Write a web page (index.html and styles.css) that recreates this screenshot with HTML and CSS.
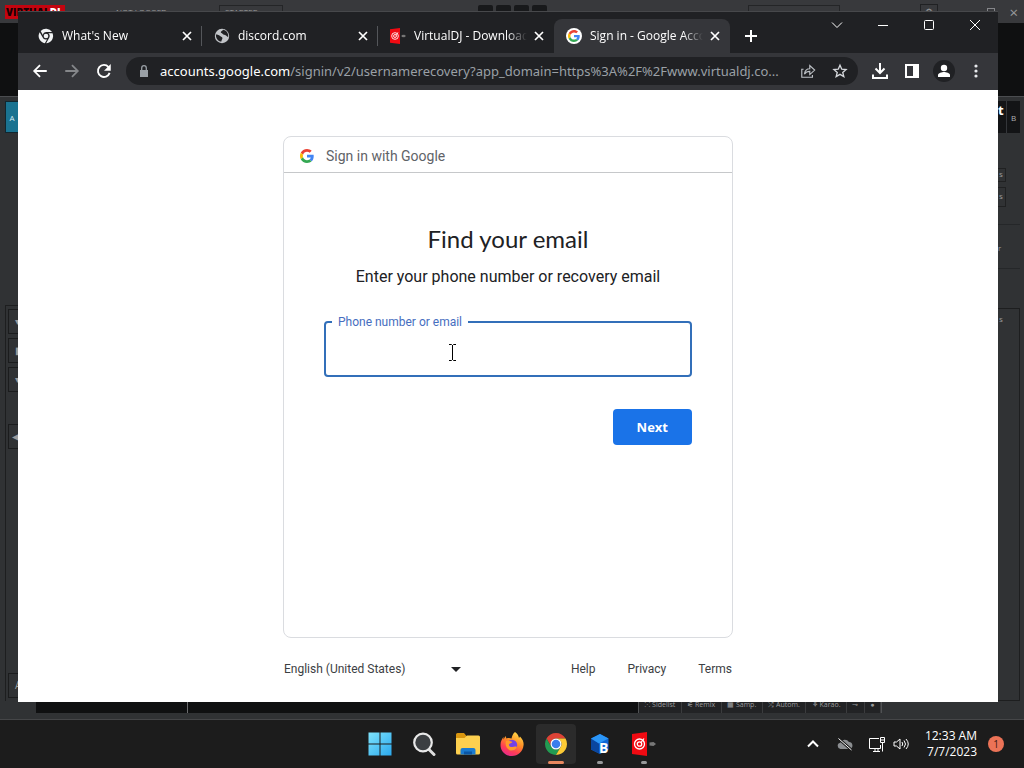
FILE: index.html
```
<!DOCTYPE html>
<html lang="en">
<head>
  <meta charset="UTF-8">
  <title>Sign in - Google Accounts</title>
  <link rel="stylesheet" href="styles.css">
</head>
<body>

<svg class="sprite" aria-hidden="true">
  <symbol id="google" viewBox="0 0 48 48">
    <path fill="#ea4335" d="M24 9.5c3.54 0 6.71 1.22 9.21 3.6l6.85-6.85C35.9 2.38 30.47 0 24 0 14.62 0 6.51 5.38 2.56 13.22l7.98 6.19C12.43 13.72 17.74 9.5 24 9.5z"/>
    <path fill="#4285f4" d="M46.98 24.55c0-1.57-.15-3.09-.38-4.55H24v9.02h12.94c-.58 2.96-2.26 5.48-4.78 7.18l7.73 6c4.51-4.18 7.09-10.36 7.09-17.65z"/>
    <path fill="#fbbc05" d="M10.53 28.59c-.48-1.45-.76-2.99-.76-4.59s.27-3.14.76-4.59l-7.98-6.19C.92 16.46 0 20.12 0 24c0 3.88.92 7.54 2.56 10.78l7.97-6.19z"/>
    <path fill="#34a853" d="M24 48c6.48 0 11.93-2.13 15.89-5.81l-7.73-6c-2.15 1.45-4.92 2.3-8.16 2.3-6.26 0-11.57-4.22-13.47-9.91l-7.98 6.19C6.51 42.62 14.62 48 24 48z"/>
  </symbol>
  <symbol id="close" viewBox="0 0 16 16">
    <path d="M4 4l8 8M12 4l-8 8" stroke="currentColor" stroke-width="1.7"/>
  </symbol>
  <symbol id="vdj" viewBox="0 0 24 24">
    <path fill="#f00a12" d="M0 2l15-2v24L0 22z"/>
    <circle cx="7.5" cy="12" r="5" fill="none" stroke="#fff" stroke-width="1.3"/>
    <circle cx="7.5" cy="12" r="2.2" fill="none" stroke="#fff" stroke-width="1.3"/>
    <path d="M9 10.5l3-4" stroke="#fff" stroke-width="1.2"/>
    <path fill="#777" d="M17.5 10.500l4-.5 2.500 2-2.500 2-4-.5z"/>
  </symbol>
</svg>

<div class="desktop">

  <!-- mixer app behind the browser -->
  <div class="mixer" aria-hidden="true">
    <div class="mixer-top">
      <span class="mixer-logo">VIRTUAL<b>DJ</b></span>
      <span class="mixer-user">● NOT LOGGED</span>
      <span class="mixer-skin">STARTER</span>
      <span class="mixer-pads"><i></i><i></i><i></i><i></i></span>
      <span class="mixer-slider"></span>
      <span class="mixer-gear">⚙</span>
      <span class="mixer-max"></span>
      <span class="mixer-close">×</span>
    </div>
    <div class="mixer-wave"></div>
    <div class="mixer-body">
      <div class="rail rail-left">
        <span class="deck deck-a">A</span>
        <div class="rail-panel">
          <span>▾</span><span>▮</span><span>▾</span><span class="rail-back">◀</span><span class="rail-last">A</span>
        </div>
      </div>
      <div class="rail rail-right">
        <div class="deck-title"><strong>it</strong><span class="deck deck-b">B</span></div>
        <span class="knob">s</span>
        <span class="knob">s</span>
        <span class="eq">r</span>
        <div class="rail-panel">s</div>
      </div>
    </div>
    <div class="mixer-bottom">
      <div class="track"></div>
      <div class="mixer-tabs">
        <span>⁙ Sidelist</span><span>⚟ Remix</span><span>▦ Samp.</span><span>⤮ Autom.</span><span>⚘ Karao.</span><span>⊸</span><span>●</span>
      </div>
    </div>
  </div>

  <div class="browser">
    <div class="tab-strip">
      <div class="tab">
        <svg class="favicon" viewBox="0 0 48 48">
          <g fill="#f1f3f4">
            <path d="M26 12H42.2A22 22 0 0 0 8 9.2L14.6 21A11 11 0 0 1 26 12z"/>
            <path d="M13.6 27.5L5 12.6A22 22 0 0 0 20.6 45.7L27.4 34A11 11 0 0 1 13.6 27.5z"/>
            <path d="M34 28.5L24.5 46A22 22 0 0 0 43.6 15.5H31A11 11 0 0 1 34 28.5z"/>
            <circle cx="24" cy="24" r="7"/>
          </g>
        </svg>
        <span class="tab-title">What's New</span>
        <button class="tab-close" aria-label="Close tab"><svg><use href="#close"/></svg></button>
      </div>
      <div class="tab">
        <svg class="favicon" viewBox="0 0 16 16">
          <circle cx="8" cy="8" r="7.2" fill="#c2c5c9"/>
          <path fill="#202124" d="M2 6.5c1.500 0 3 .5 4 1.500 1.200 1 2.200.8 2.400 2 .2 1.400-1 1.700-1 3.600C4 13.500 1.500 10 2 6.500zM9 1.800c-.4 1.400-2 1.200-2.200 2.200-.2 1.200 1.500 1 2 2 .5 1.200 2 .6 3.200 1.600 1 .8 1.200 1.400 2.200 1.400C14.700 5 12 2 9 1.800z"/>
        </svg>
        <span class="tab-title">discord.com</span>
        <button class="tab-close" aria-label="Close tab"><svg><use href="#close"/></svg></button>
      </div>
      <div class="tab">
        <svg class="favicon"><use href="#vdj"/></svg>
        <span class="tab-title">VirtualDJ - Download</span>
        <button class="tab-close" aria-label="Close tab"><svg><use href="#close"/></svg></button>
      </div>
      <div class="tab tab-active">
        <span class="favicon favicon-google"><svg><use href="#google"/></svg></span>
        <span class="tab-title">Sign in - Google Accounts</span>
        <button class="tab-close" aria-label="Close tab"><svg><use href="#close"/></svg></button>
      </div>
      <button class="tab-new" aria-label="New tab">
        <svg viewBox="0 0 16 16"><path d="M8 2v12M2 8h12" stroke="#fff" stroke-width="2"/></svg>
      </button>
      <div class="window-controls">
        <button aria-label="Search tabs"><svg viewBox="0 0 12 12"><path d="M1 3.500l5 5 5-5"/></svg></button>
        <button aria-label="Minimize"><svg viewBox="0 0 12 12"><path d="M1 6.500h10"/></svg></button>
        <button aria-label="Maximize"><svg viewBox="0 0 12 12"><rect x="1.500" y="1.500" width="9" height="9" rx="1"/></svg></button>
        <button aria-label="Close"><svg viewBox="0 0 12 12"><path d="M1 1l10 10M11 1L1 11"/></svg></button>
      </div>
    </div>

    <div class="toolbar">
      <button aria-label="Back"><svg viewBox="0 0 24 24"><path fill="#fff" d="M21 10.800H7.200l5.700-5.700L11.200 3.400 2.600 12l8.600 8.600 1.700-1.700-5.700-5.700H21z"/></svg></button>
      <button aria-label="Forward"><svg viewBox="0 0 24 24"><path fill="#85878a" d="M3 10.800h13.800l-5.700-5.700 1.700-1.700 8.600 8.600-8.600 8.600-1.700-1.700 5.700-5.700H3z"/></svg></button>
      <button aria-label="Reload"><svg viewBox="0 0 24 24"><path fill="none" stroke="#fff" stroke-width="2.500" d="M19.500 14.500A8 8 0 1 1 18 6.700"/><path fill="#fff" d="M21 2.500v9h-9z"/></svg></button>
      <div class="omnibox">
        <svg class="lock" viewBox="0 0 12 12"><path fill="#9aa0a6" d="M2 5h8v7H2z"/><path fill="none" stroke="#9aa0a6" stroke-width="1.300" d="M3.700 5.500V3a2.300 2.300 0 0 1 4.600 0v2.500"/></svg>
        <span class="url"><b>accounts.google.com</b>/signin/v2/usernamerecovery?app_domain=https%3A%2F%2Fwww.virtualdj.co...</span>
        <button aria-label="Share"><svg viewBox="0 0 18 18"><path fill="none" stroke="#bdc1c6" stroke-width="1.300" d="M4 7H2v9h12v-2.500M5 12.500c.5-4 3-6 6-6V3l5.500 5-5.500 5V9.500c-2.500 0-4.500.8-6 3z"/></svg></button>
        <button aria-label="Bookmark"><svg viewBox="0 0 18 18"><path fill="none" stroke="#d5d8dc" stroke-width="1.500" d="M9 2.500l2 4.500 4.800.4-3.700 3.200 1.200 4.800L9 12.800l-4.300 2.600 1.200-4.800L2.200 7.400 7 7z"/></svg></button>
      </div>
      <button aria-label="Downloads"><svg viewBox="0 0 18 18"><path fill="none" stroke="#fff" stroke-width="2" d="M9 1v9.500M4.500 6.500L9 11l4.500-4.500M2 12.500V16h14v-3.500"/></svg></button>
      <button aria-label="Side panel"><svg viewBox="0 0 18 18"><path fill="#fff" fill-rule="evenodd" d="M2 2h14v14H2zM4 4v10h6V4z"/></svg></button>
      <button aria-label="Profile"><span class="avatar"><svg viewBox="0 0 16 16"><circle cx="8" cy="5" r="3.200" fill="#fff"/><path fill="#fff" d="M2 14v-2c0-2 4-3 6-3s6 1 6 3v2z"/></svg></span></button>
      <button aria-label="Menu"><svg viewBox="0 0 18 18" fill="#e8eaed"><circle cx="9" cy="4" r="1.600"/><circle cx="9" cy="9" r="1.600"/><circle cx="9" cy="14" r="1.600"/></svg></button>
    </div>

    <main class="page">
      <div class="column">
        <form class="card">
          <header class="card-header">
            <svg><use href="#google"/></svg>
            <span>Sign in with Google</span>
          </header>
          <div class="card-body">
            <h1>Find your email</h1>
            <p>Enter your phone number or recovery email</p>
            <div class="field">
              <input id="contact" type="text">
              <label for="contact">Phone number or email</label>
              <svg class="cursor" viewBox="0 0 9 17"><path fill="none" stroke="#000" d="M1 .5h2.500l1 1 1-1H8M4.500 1v15M1 16.500h2.500l1-1 1 1H8"/></svg>
            </div>
            <div class="actions"><button class="next" type="button">Next</button></div>
          </div>
        </form>
        <footer class="footer">
          <div class="language">
            <select aria-label="Language"><option>English (United States)</option></select>
            <svg viewBox="0 0 10 5"><path fill="#202124" d="M0 0h10L5 5z"/></svg>
          </div>
          <nav>
            <a href="#">Help</a>
            <a href="#">Privacy</a>
            <a href="#">Terms</a>
          </nav>
        </footer>
      </div>
    </main>
  </div>
</div>

<div class="taskbar">
  <div class="apps">
    <button aria-label="Start">
      <svg viewBox="0 0 24 24">
        <linearGradient id="win" x2="1" y2="1"><stop offset="0" stop-color="#7fe3fb"/><stop offset="1" stop-color="#2ba9ee"/></linearGradient>
        <path fill="url(#win)" d="M.5.5h11v11H.5zM12.500.5h11v11h-11zM.5 12.500h11v11H.5zM12.500 12.500h11v11h-11z"/>
      </svg>
    </button>
    <button aria-label="Search">
      <svg viewBox="0 0 24 24"><path stroke="#ddd" stroke-width="3" stroke-linecap="round" d="M17 17.500l5 5"/><circle cx="11" cy="10.500" r="8.800" fill="#3c3f42" stroke="#e8e8e8" stroke-width="2.200"/></svg>
    </button>
    <button aria-label="File Explorer">
      <svg viewBox="0 0 24 24"><path fill="#d9960f" d="M0 2.500Q0 1 1.500 1H8l2.500 3H12v6H0z"/><path fill="#fdd04f" d="M0 6h8.500l2.500-2.500h11.500Q24 3.500 24 5v16q0 1.500-1.500 1.500h-21Q0 22.500 0 21z"/><path fill="#1a7bd0" d="M4.500 22.500V18q0-2 2-2h11q2 0 2 2v4.500z"/><path fill="#0b56a5" d="M8 19.500h8v3H8z"/></svg>
    </button>
    <button aria-label="Firefox">
      <svg viewBox="0 0 24 24">
        <linearGradient id="fox" x1=".8" x2=".3" y2="1"><stop offset="0" stop-color="#ffe14a"/><stop offset=".45" stop-color="#ff8a25"/><stop offset=".75" stop-color="#ff3d55"/><stop offset="1" stop-color="#e42a8c"/></linearGradient>
        <path fill="url(#fox)" d="M15 0c3 2 3.500 4 4 6l1-1.500c3 3 4 6 3.500 9C22.800 19.500 18 24 12 24 5.500 24 .5 19.500.5 13c0-3.500 1.500-6 3-8v2.500L5.500 4l1 2.500c2-.8 3.500-.5 5 0C12 4 13 1.500 15 0z"/>
        <circle cx="12" cy="13" r="5.200" fill="#7542e5"/>
        <path fill="#ff9a29" d="M6 9c2.500-.8 4.500 0 6.500 1-1 1.500-3 1.200-3.500 2.500-.4 1.500 1.500 3 3.500 2.500 1.500-.3 3-.7 4.500 0-1 2.500-3 3.500-5.500 3.500C7.500 18.500 4.500 14 6 9z"/>
      </svg>
    </button>
    <button class="app-current" aria-label="Chrome">
      <svg viewBox="0 0 48 48">
        <path fill="#dd4336" d="M24 13H43.050A22 22 0 0 0 4.950 13L14.470 29.500A11 11 0 0 1 24 13z"/>
        <path fill="#229b52" d="M14.470 29.500L4.950 13A22 22 0 0 0 24 46L33.530 29.500A11 11 0 0 1 14.470 29.500z"/>
        <path fill="#fcca35" d="M33.530 29.500L24 46A22 22 0 0 0 43.050 13H24A11 11 0 0 1 33.530 29.500z"/>
        <circle cx="24" cy="24" r="11" fill="#fff"/>
        <circle cx="24" cy="24" r="8.600" fill="#3b7ded"/>
      </svg>
    </button>
    <button class="app-running" aria-label="BlueStacks">
      <svg viewBox="0 0 24 24"><path fill="#0f66d6" d="M12 2l8.500 4.500v11L12 22l-9-4.500v-11z"/><path fill="#0a469f" d="M3 6.500l8 5v10l-8-4z"/><path fill="#2b96f7" d="M12 2l8.500 4.500L11 11.500l-8-5z"/><text x="11" y="21" font-family="Open Sans" font-weight="700" font-size="14" fill="#fff">B</text></svg>
    </button>
    <button class="app-running" aria-label="VirtualDJ"><svg><use href="#vdj"/></svg></button>
  </div>
  <div class="tray">
    <svg class="tray-icon" viewBox="0 0 16 16"><path d="M3 10.500l5-5 5 5" stroke-width="2"/></svg>
    <svg class="tray-icon" viewBox="0 0 16 16"><path fill="#8b8e91" stroke="none" d="M3.500 13a3.200 3.200 0 0 1-.3-6.300A5 5 0 0 1 12 6a3.600 3.600 0 0 1 1 7z"/><path stroke="#1c1c1c" stroke-width="3" d="M1.500 2.500l13 11.500"/><path d="M1.500 2.500l13 11.500"/></svg>
    <div class="tray-group">
      <svg class="tray-icon" viewBox="0 0 16 16"><path d="M10 2.500H.5v10h11V9M4 15.500h7M6 12.500v3M9 12.500v3M11.500 1.500h4v5h-4zM11.500 4h4M13.500 6.500v9"/></svg>
      <svg class="tray-icon" viewBox="0 0 16 16"><path d="M1 6v4h2.500L7 13V3L3.500 6zM9 6q1.500 2 0 4M11 4.500q3 3.500 0 7M13 3q4.500 5 0 10"/></svg>
    </div>
    <time class="clock">12:33 AM<br>7/7/2023</time>
    <span class="badge">1</span>
  </div>
</div>

</body>
</html>
```
FILE: styles.css
```
* {
  box-sizing: border-box;
}
body {
  margin: 0;
  height: 100vh;
  display: flex;
  flex-direction: column;
  overflow: hidden;
  background: #1c1c1c;
  font-family: "Open Sans", "Noto Sans", sans-serif;
  font-size: 12px;
}
button {
  display: flex;
  align-items: center;
  justify-content: center;
  padding: 0;
  border: 0;
  background: none;
  color: inherit;
  font: inherit;
}
svg {
  display: block;
  flex: none;
}
.sprite {
  position: absolute;
  width: 0;
  height: 0;
}
.desktop {
  position: relative;
  flex: 1;
  min-height: 0;
}

/* mixer app */
.mixer {
  height: 100%;
  display: flex;
  flex-direction: column;
  background: #303234;
  color: #9a9b9c;
  font-size: 8px;
  overflow: hidden;
}
.mixer-top {
  display: flex;
  align-items: center;
  height: 23px;
  flex: none;
  padding: 0 6px 0 5px;
  background: #38393c;
}
.mixer-logo {
  width: 60px;
  padding-left: 1px;
  background: #c4040f;
  color: #180002;
  font-size: 10px;
  font-weight: 800;
  line-height: 14px;
}
.mixer-logo b {
  color: #fff;
}
.mixer-user {
  margin-left: 40px;
  width: 114px;
  padding-left: 4px;
}
.mixer-skin {
  width: 64px;
  height: 14px;
  padding-left: 5px;
  border: 1px solid #242527;
  line-height: 12px;
}
.mixer-pads {
  display: flex;
  gap: 3px;
  margin-left: 195px;
}
.mixer-pads i {
  width: 15px;
  height: 14px;
  border-radius: 2px;
  background: #18191b;
}
.mixer-slider {
  width: 92px;
  height: 14px;
  margin: 0 80px 0 201px;
  border: 1px solid #242527;
}
.mixer-gear {
  width: 18px;
  height: 16px;
  border: 1px solid #202123;
  font-size: 9px;
  line-height: 14px;
  text-align: center;
}
.mixer-max {
  width: 8px;
  height: 8px;
  margin-left: auto;
  border: 1px solid #85868a;
}
.mixer-close {
  margin-left: 14px;
  font-size: 15px;
}
.mixer-wave {
  height: 74px;
  flex: none;
  background: #0f1011;
  border-bottom: 1px solid #4b4d50;
}
.mixer-body {
  flex: 1;
  min-height: 0;
  display: flex;
  justify-content: space-between;
}
.rail {
  display: flex;
  flex-direction: column;
  padding-top: 4px;
}
.rail-left {
  width: 40px;
  padding-left: 5px;
}
.rail-right {
  width: 32px;
  padding-right: 4px;
}
.deck {
  display: flex;
  align-items: center;
  width: 14px;
  height: 32px;
  justify-content: center;
}
.deck-a {
  background: #1a7391;
  border: 1px solid #11272f;
  color: #d6edf5;
}
.deck-title {
  display: flex;
  justify-content: space-between;
  padding-left: 2px;
  background: #131416;
  color: #fff;
}
.deck-title strong {
  font-size: 13px;
}
.deck-b {
  border-left: 1px solid #34363a;
  color: #b0b1b3;
}
.rail-left .rail-panel {
  flex: 1;
  display: flex;
  flex-direction: column;
  gap: 4px;
  margin-top: 172px;
  padding: 3px 0 3px 2px;
  border: 1px solid #1d1e1f;
  border-bottom: 0;
}
.rail-left .rail-panel span {
  height: 25px;
  padding-left: 6px;
  border: 1px solid #1b1c1d;
  font-size: 10px;
  line-height: 23px;
}
.rail-left .rail-panel .rail-back {
  margin-top: 28px;
  padding-left: 3px;
}
.rail-left .rail-panel .rail-last {
  margin-top: auto;
}
.knob {
  width: 14px;
  height: 20px;
  margin: 0 0 5px;
  border: 1px solid #202122;
  line-height: 16px;
  padding-left: 6px;
}
.deck-title + .knob {
  height: 14px;
  margin-top: 35px;
  line-height: 10px;
}
.eq {
  height: 45px;
  margin-top: 12px;
  padding-left: 6px;
  border: 1px solid #252729;
  border-width: 1px 0;
  line-height: 46px;
}
.rail-right .rail-panel {
  flex: 1;
  margin-top: 39px;
  padding: 4px 6px;
  border: 1px solid #1d1e1f;
}
.mixer-bottom {
  display: flex;
  height: 19px;
  flex: none;
  padding: 0 6px 6px 36px;
  border-bottom: 1px solid #454648;
}
.track {
  flex: 0 1 602px;
  background: linear-gradient(90deg, transparent 151px, #6b6c6e 151px, #6b6c6e 152px, transparent 152px) #0f1011;
}
.mixer-tabs {
  display: flex;
  width: 244px;
  border: 1px solid #505254;
  border-width: 0 1px;
  background: #222325;
  font-size: 7px;
  line-height: 8px;
  white-space: nowrap;
}
.mixer-tabs span {
  flex: auto;
  border-right: 1px solid #3b3c3e;
  text-align: center;
}

/* browser window */
.browser {
  position: absolute;
  inset: 11px 26px 18px 18px;
  display: flex;
  flex-direction: column;
  background: #fff;
}
.tab-strip {
  display: flex;
  align-items: flex-end;
  height: 42px;
  flex: none;
  padding-left: 8px;
  border-top: 1px solid #47484b;
  background: #202124;
  color: #fff;
}
.tab {
  display: flex;
  align-items: center;
  flex: 0 1 176px;
  min-width: 0;
  height: 34px;
  padding: 0 7px 1px 12px;
  background: linear-gradient(#54565a, #54565a) right center / 1px 20px no-repeat;
}
.tab:nth-child(3) {
  background: none;
}
.tab-active {
  border-radius: 8px 8px 0 0;
  background: #35363a;
}
.favicon {
  width: 16px;
  height: 16px;
  flex: none;
  margin-right: 8px;
}
.favicon-google {
  padding: 2px;
  border-radius: 50%;
  background: #fff;
}
.favicon-google svg {
  width: 12px;
  height: 12px;
}
.tab-title {
  flex: 1;
  overflow: hidden;
  white-space: nowrap;
  -webkit-mask-image: linear-gradient(90deg, #000 calc(100% - 20px), transparent);
}
.tab-close {
  width: 16px;
  height: 16px;
  margin-left: 4px;
}
.tab-close svg {
  width: 16px;
  height: 16px;
}
.tab-new {
  width: 28px;
  height: 34px;
  margin-left: 7px;
}
.tab-new svg {
  width: 16px;
  height: 16px;
}
.window-controls {
  display: flex;
  align-self: flex-start;
  margin-left: auto;
}
.window-controls button {
  width: 46px;
  height: 26px;
}
.window-controls svg {
  width: 12px;
  height: 12px;
  fill: none;
  stroke: #fff;
}
.toolbar {
  display: flex;
  align-items: center;
  height: 37px;
  flex: none;
  padding: 0 6px 1px;
  background: #35363a;
}
.toolbar button {
  width: 32px;
  height: 28px;
}
.toolbar button svg {
  width: 18px;
  height: 18px;
}
.omnibox {
  display: flex;
  align-items: center;
  flex: 1;
  min-width: 0;
  height: 28px;
  margin: 0 6px;
  padding: 0 2px 0 12px;
  border-radius: 14px;
  background: #202124;
}
.omnibox button svg {
  width: 16px;
  height: 16px;
}
.lock {
  width: 12px;
  height: 12px;
  margin-right: 10px;
}
.url {
  flex: 1;
  color: #9aa0a6;
  font-family: "Noto Sans", "Open Sans", sans-serif;
  font-size: 13px;
  white-space: nowrap;
}
.url b {
  color: #fff;
  font-weight: 400;
}
.avatar {
  display: flex;
  align-items: center;
  justify-content: center;
  width: 22px;
  height: 22px;
  border-radius: 50%;
  background: #202124;
}
.toolbar .avatar svg {
  width: 16px;
  height: 16px;
}

/* sign-in page */
.page {
  flex: 1;
  display: flex;
  justify-content: center;
  padding-top: 46px;
  background: #fff;
  color: #202124;
  font-family: Roboto, Arial, sans-serif;
}
.column {
  flex: 0 1 450px;
}
.card {
  min-height: 502px;
  border: 1px solid #dadce0;
  border-radius: 8px;
}
.card-header {
  display: flex;
  align-items: center;
  gap: 12px;
  height: 36px;
  padding: 2px 16px 0;
  border-bottom: 1px solid #c6c8ca;
  color: #5f6368;
  font-size: 14px;
}
.card-header svg {
  width: 14px;
  height: 14px;
}
.card-body {
  padding: 50px 40px 0;
}
.card-body h1 {
  margin: 0;
  font-family: Lato, sans-serif;
  font-size: 24px;
  font-weight: 400;
  line-height: 32px;
  text-align: center;
}
.card-body p {
  margin: 10px 0 32px;
  font-size: 16px;
  line-height: 24px;
  text-align: center;
}
.field {
  position: relative;
}
.field input {
  display: block;
  width: 100%;
  height: 56px;
  padding: 0 14px;
  border: 2px solid #326fb9;
  border-radius: 4px;
  outline: 0;
  font: 16px Roboto, sans-serif;
}
.field label {
  position: absolute;
  top: -7px;
  left: 8px;
  padding: 0 6px;
  background: #fff;
  color: #466ec0;
  line-height: 16px;
}
.cursor {
  position: absolute;
  top: 23px;
  left: 124px;
  width: 9px;
  height: 17px;
}
.actions {
  display: flex;
  justify-content: flex-end;
  margin-top: 32px;
}
.next {
  height: 36px;
  padding: 0 24px;
  border-radius: 4px;
  background: #1a73e8;
  color: #fff;
  font-family: "Open Sans", sans-serif;
  font-size: 13px;
  font-weight: 700;
}
.footer {
  display: flex;
  justify-content: space-between;
  padding: 20px 1px 0;
  line-height: 22px;
}
.language {
  position: relative;
}
.language select {
  width: 186px;
  height: 22px;
  padding: 0;
  border: 0;
  appearance: none;
  background: none;
  color: #3c4043;
  font: 12px Roboto, sans-serif;
}
.language svg {
  position: absolute;
  top: 9px;
  right: 9px;
  width: 10px;
  height: 5px;
  pointer-events: none;
}
.footer nav {
  display: flex;
  gap: 32px;
}
.footer a {
  color: #3c4043;
  text-decoration: none;
}

/* taskbar */
.taskbar {
  display: grid;
  grid-template-columns: 1fr auto 1fr;
  align-items: center;
  height: 48px;
  flex: none;
  background: #1c1c1c;
  color: #fff;
}
.apps {
  grid-column: 2;
  display: flex;
  gap: 4px;
}
.apps button {
  position: relative;
  width: 40px;
  height: 40px;
  border-radius: 4px;
}
.apps svg {
  width: 24px;
  height: 24px;
}
.apps .app-current {
  background: #2b2b2b;
}
.app-current::after,
.app-running::after {
  content: "";
  position: absolute;
  bottom: 0;
  width: 6px;
  height: 3px;
  border-radius: 2px;
  background: #98999a;
}
.apps .app-current::after {
  width: 16px;
  background: #e8875f;
}
.tray {
  display: flex;
  align-items: center;
  justify-content: flex-end;
  gap: 16px;
  padding-right: 20px;
}
.tray-icon {
  width: 16px;
  height: 16px;
  fill: none;
  stroke: #fff;
}
.tray-group {
  display: flex;
  gap: 8px;
}
.clock {
  font-size: 12px;
  line-height: 16px;
  text-align: right;
}
.badge {
  width: 16px;
  height: 16px;
  margin-left: -5px;
  border-radius: 50%;
  background: #ec7357;
  color: #401a12;
  font-size: 10px;
  line-height: 16px;
  text-align: center;
}
```
